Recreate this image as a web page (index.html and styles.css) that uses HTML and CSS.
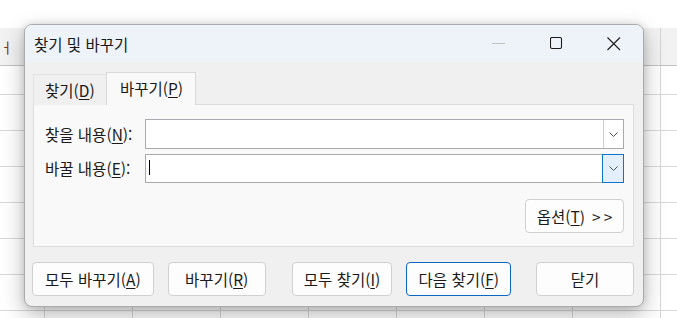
FILE: index.html
```html
<!DOCTYPE html>
<html lang="ko">
<head>
<meta charset="utf-8">
<title>찾기 및 바꾸기</title>
<link rel="stylesheet" href="styles.css">
</head>
<body>
<div class="sheet">
  <div class="formula"></div>
  <div class="colhead"><span class="cut">ㅓ</span></div>
  <div class="cells"></div>
</div>

<div class="dialog">
  <div class="titlebar">
    <span class="title">찾기 및 바꾸기</span>
    <div class="controls">
      <span class="ctl"><svg width="13" height="2" viewBox="0 0 13 2"><path d="M0 0.5H13" stroke="#c2c2c2" stroke-width="1"/></svg></span>
      <span class="ctl"><svg width="13" height="13" viewBox="0 0 13 13"><rect x="0.5" y="0.5" width="11" height="11" rx="1.5" fill="none" stroke="#1b1b1b" stroke-width="1.1"/></svg></span>
      <span class="ctl"><svg width="14" height="14" viewBox="0 0 14 14"><path d="M0.5 0.5L13 13M13 0.5L0.5 13" stroke="#1b1b1b" stroke-width="1.1"/></svg></span>
    </div>
  </div>
  <div class="body">
    <div class="tabs">
      <div class="tab">찾기(<u>D</u>)</div>
      <div class="tab active">바꾸기(<u>P</u>)</div>
    </div>
    <div class="panel">
      <div class="row">
        <span class="label">찾을 내용(<u>N</u>):</span>
        <div class="combo">
          <span class="drop"><svg width="9" height="5" viewBox="0 0 9 5"><path d="M0.5 0.5L4.5 4.5L8.5 0.5" fill="none" stroke="#505050" stroke-width="1"/></svg></span>
        </div>
      </div>
      <div class="row row2">
        <span class="label">바꿀 내용(<u>E</u>):</span>
        <div class="combo focus">
          <span class="caret"></span>
          <span class="drop"><svg width="9" height="5" viewBox="0 0 9 5"><path d="M0.5 0.5L4.5 4.5L8.5 0.5" fill="none" stroke="#505050" stroke-width="1"/></svg></span>
        </div>
      </div>
      <div class="optrow">
        <span class="btn opt">옵션(<u>T</u>)&nbsp; &gt;&#8201;&gt;</span>
      </div>
    </div>
    <div class="buttons">
      <span class="btn b-all">모두 바꾸기(<u>A</u>)</span>
      <span class="btn b-rep">바꾸기(<u>R</u>)</span>
      <span class="btn b-findall">모두 찾기(<u>I</u>)</span>
      <span class="btn b-next default">다음 찾기(<u>F</u>)</span>
      <span class="btn b-close">닫기</span>
    </div>
  </div>
</div>
</body>
</html>
```

FILE: styles.css
```css
* { box-sizing: border-box; margin: 0; padding: 0; }

html, body {
  width: 677px;
  height: 318px;
  overflow: hidden;
}

body {
  position: relative;
  background: #ffffff;
  font-family: "Noto Sans CJK KR", "Noto Sans", sans-serif;
  color: #1a1a1a;
  font-size: 15.5px;
}

u { text-decoration: underline; text-underline-offset: 2px; text-decoration-thickness: 1px; }

/* background spreadsheet */
.sheet {
  position: absolute;
  inset: 0;
  display: flex;
  flex-direction: column;
}
.formula { height: 28px; background: #ffffff; }
.colhead {
  height: 38px;
  background-color: #f2f2f2;
  background-image: linear-gradient(90deg, transparent 87px, #d4d4d4 87px);
  background-size: 88px 100%;
  background-position: -43px 0;
  border-bottom: 1px solid #c2c2c2;
  overflow: hidden;
  display: flex;
  align-items: center;
}
.cut {
  margin-left: 0;
  font-size: 14px;
  color: #7d3b1e;
}
.cells {
  flex: 1;
  background-color: #ffffff;
  background-image:
    linear-gradient(90deg, transparent 87px, #d8d8d8 87px),
    linear-gradient(180deg, transparent 35px, #d8d8d8 35px);
  background-size: 88px 100%, 100% 36px;
  background-position: -43px 0, 0 -7px;
}

/* dialog */
.dialog {
  position: absolute;
  left: 24px;
  top: 24px;
  width: 620px;
  height: 283px;
  border: 1px solid #ababab;
  border-radius: 8px;
  background: #f0f0f0;
  box-shadow: 0 8px 22px rgba(0,0,0,0.28), 0 0 7px rgba(0,0,0,0.12);
  overflow: hidden;
  display: flex;
  flex-direction: column;
}

.titlebar {
  height: 37px;
  background: #eef3f9;
  display: flex;
  align-items: center;
  padding-left: 9px;
}
.title { flex: 1; color: #1a1a1a; }
.controls { display: flex; height: 100%; }
.ctl {
  width: 58px;
  height: 100%;
  display: flex;
  align-items: center;
  justify-content: center;
}

.body {
  flex: 1;
  padding: 10px 9px 10px 8px;
  display: flex;
  flex-direction: column;
}

.tabs {
  height: 33px;
  margin-bottom: -1px;
  display: flex;
  align-items: flex-end;
  position: relative;
  z-index: 1;
}
.tab {
  width: 73px;
  height: 31px;
  padding-left: 11px;
  display: flex;
  align-items: center;
  border: 1px solid #e2e2e2;
  border-bottom: none;
  border-right: none;
  background: #f0f0f0;
  padding-bottom: 1px;
}
.tab.active {
  width: 90px;
  height: 33px;
  padding-left: 13px;
  border: 1px solid #d9d9d9;
  border-bottom: none;
  background: #f9f9f9;
  padding-bottom: 2px;
}

.panel {
  height: 143px;
  border: 1px solid #dcdcdc;
  background: #f9f9f9;
  padding: 14px 9px 0 11px;
  display: flex;
  flex-direction: column;
}
.row { display: flex; align-items: center; }
.row2 { margin-top: 5px; }
.label { width: 100px; padding-bottom: 1px; white-space: nowrap; }
.combo {
  flex: 1;
  height: 30px;
  border: 1px solid #a9a9ae;
  background: #ffffff;
  display: flex;
  justify-content: flex-end;
  align-items: stretch;
  position: relative;
}
.row2 .combo { height: 29px; }
.drop {
  width: 20px;
  border-left: 1px solid #cfcfcf;
  background: #ffffff;
  display: flex;
  align-items: center;
  justify-content: center;
}
.combo.focus .drop {
  width: 22px;
  margin: -1px -1px -1px 0;
  border: 1px solid #0a74d1;
  background: #e3effb;
}
.caret {
  position: absolute;
  left: 3px;
  top: 5px;
  width: 1px;
  height: 15px;
  background: #000;
}

.optrow { display: flex; justify-content: flex-end; margin-top: 16px; }

.btn {
  height: 34px;
  display: flex;
  align-items: center;
  justify-content: center;
  border: 1px solid #d0d0d0;
  border-radius: 4px;
  background: #fdfdfd;
  padding-bottom: 1px;
  white-space: nowrap;
}
.opt { width: 99px; }

.buttons { display: flex; margin-top: 15px; margin-left: -1px; }
.b-all { width: 122px; }
.b-rep { width: 98px; margin-left: 14px; }
.b-findall { width: 101px; margin-left: 26px; }
.b-next { width: 105px; margin-left: 14px; }
.b-close { width: 98px; margin-left: 25px; }
.default { border-color: #0a67c4; }
```
